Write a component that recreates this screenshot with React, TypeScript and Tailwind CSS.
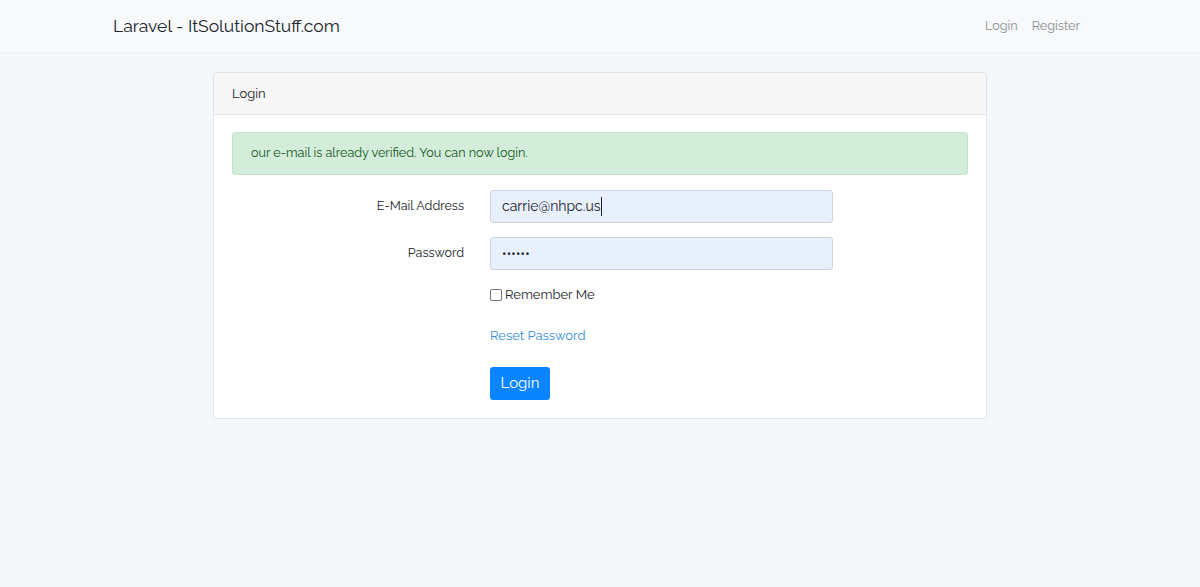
import React from "react";

export default function App() {
  return (
    <div className="min-h-[587px] w-full bg-[#f5f8fa] text-[#212529]" style={{ fontFamily: "Raleway, Lato, 'Noto Sans', sans-serif" }}>
      <nav className="h-[52px] bg-[#f7f9fa] shadow-[0_1px_2px_rgba(0,0,0,0.03)]">
        <div className="flex h-full items-center justify-between pl-[113px] pr-[120px]">
          <a className="text-[17.5px] text-[#212529]">Laravel - ItSolutionStuff.com</a>
          <div className="flex items-center gap-[14px] text-[12.7px] text-[#8a8e91]">
            <a>Login</a>
            <a>Register</a>
          </div>
        </div>
      </nav>
      <div className="pt-[20px]">
        <div className="ml-[213px] w-[774px] rounded-[3px] border border-[#e2e4e6] bg-white">
          <div className="h-[42px] flex items-center px-[18px] bg-[#f7f7f7] border-b border-[#e2e4e6] text-[13px]">Login</div>
          <div className="px-[18px] pt-[17px] pb-[18px]">
            <div className="h-[43px] flex items-center px-[18px] rounded-[3px] border border-[#c3e6cb] bg-[#d4edda] text-[#155724] text-[12.6px]">
              our e-mail is already verified. You can now login.
            </div>
            <div className="mt-[15px] flex items-center">
              <div className="w-[232px] text-right text-[12.6px]">E-Mail Address</div>
              <div className="ml-[26px] w-[343px] h-[33px] rounded-[3px] border border-[#ced4da] bg-[#e8f0fe] flex items-center px-[11px] text-[14px] text-[#212529]">
                carrie@nhpc.us<span className="inline-block w-[1px] h-[19px] bg-[#212529] ml-[0.5px]"></span>
              </div>
            </div>
            <div className="mt-[14px] flex items-center">
              <div className="w-[232px] text-right text-[12.6px]">Password</div>
              <div className="ml-[26px] w-[343px] h-[33px] rounded-[3px] border border-[#ced4da] bg-[#e8f0fe] flex items-center px-[11px] text-[12px] font-bold tracking-[0.3px] text-[#212529]">
                ••••••
              </div>
            </div>
            <div className="mt-[15px] ml-[258px] flex items-center gap-[3px] text-[13px]">
              <span className="inline-block w-[12px] h-[12px] rounded-[2px] border border-[#767676] bg-white"></span>
              <span>Remember Me</span>
            </div>
            <div className="mt-[21px] ml-[258px] text-[13px] text-[#3490dc]">Reset Password</div>
            <div className="mt-[22px] ml-[258px]">
              <div className="w-[60px] h-[33px] rounded-[3px] bg-[#0a84ff] text-white text-[15px] flex items-center justify-center">Login</div>
            </div>
          </div>
        </div>
      </div>
    </div>
  );
}
